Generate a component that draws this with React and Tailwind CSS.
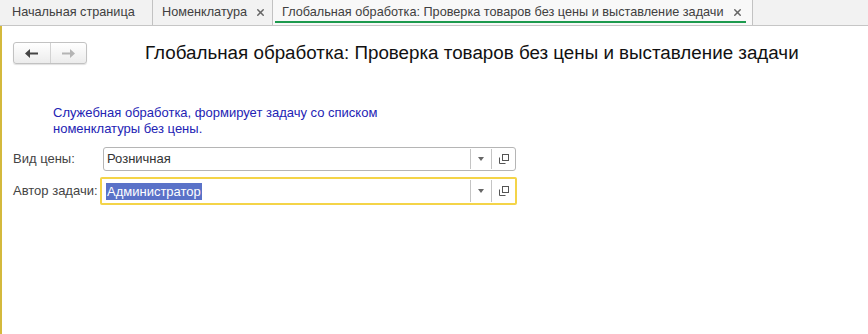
import { X } from 'lucide-react'

function OpenIcon() {
  return (
    <svg width="10" height="10" viewBox="0 0 10 10" fill="none" stroke="#555" strokeWidth="1">
      <rect x="3.5" y="0.5" width="6" height="6" />
      <path d="M0.5 3.5v6h6" />
    </svg>
  )
}

function Field({ value, focused }) {
  return (
    <div
      className={
        focused
          ? 'flex h-[28px] w-[417px] items-stretch rounded-[2px] border-2 border-[#f4d448] bg-white -ml-[3px]'
          : 'flex h-[24px] w-[413px] items-stretch rounded-[3px] border border-[#b5b5b5] bg-white'
      }
    >
      <div className={focused ? 'flex flex-1 items-center pl-[4px]' : 'flex flex-1 items-center pl-[3px]'}>
        {focused ? (
          <span className="bg-[#5a72c8] px-[1px] leading-[17px] text-white">{value}</span>
        ) : (
          <span className="text-[#333]">{value}</span>
        )}
      </div>
      <div className="my-[1px] flex w-[21px] items-center justify-center border-l border-[#c4c4c4]">
        <svg width="6" height="4" viewBox="0 0 6 4">
          <path d="M0 0h6L3 4z" fill="#666" />
        </svg>
      </div>
      <div className="my-[1px] flex w-[24px] items-center justify-center border-l border-[#c4c4c4]">
        <OpenIcon />
      </div>
    </div>
  )
}

export default function App() {
  return (
    <div className="flex h-[334px] w-[868px] flex-col bg-white font-['Liberation_Sans',Arial,sans-serif] text-[13px]">
      {/* tabs */}
      <div className="flex h-[26px] shrink-0 border-b border-[#c6c6c6] bg-[#f2f2f2] text-[12.7px] text-[#404040]">
        <div className="flex w-[153px] items-center whitespace-nowrap border-r border-[#c2c2c2] pl-[12px]">
          Начальная страница
        </div>
        <div className="flex w-[120px] items-center whitespace-nowrap border-r border-[#c2c2c2] pl-[9px]">
          Номенклатура
          <X size={11} strokeWidth={3.2} className="ml-[8px] shrink-0 text-[#666]" />
        </div>
        <div className="relative flex w-[480px] items-center whitespace-nowrap border-r border-[#c2c2c2] bg-[#f8f8f8] pl-[9px]">
          <span>Глобальная обработка: Проверка товаров без цены и выставление задачи</span>
          <X size={11} strokeWidth={3.2} className="ml-[8px] shrink-0 text-[#666]" />
          <div className="absolute bottom-[2px] left-[2px] right-[6px] h-[2px] bg-[#1d9a4e]" />
        </div>
      </div>

      {/* content */}
      <div className="flex flex-1 flex-col border-l-2 border-[#d4b93c] pl-[11px] pt-[13px]">
        <div className="flex items-center">
          <div className="flex h-[22px] w-[74px] shrink-0 rounded-[3px] border border-[#c2c2c2] bg-gradient-to-b from-white to-[#ececec] shadow-[0_1px_1px_rgba(0,0,0,0.12)]">
            <div className="flex flex-1 items-center justify-center border-r border-[#d2d2d2]">
              <svg width="13" height="9" viewBox="0 0 13 9">
                <path d="M0 4.5L5 0v3.5h8v2H5V9z" fill="#444" />
              </svg>
            </div>
            <div className="flex flex-1 items-center justify-center">
              <svg width="13" height="9" viewBox="0 0 13 9">
                <path d="M13 4.5L8 0v3.5H0v2h8V9z" fill="#b4b4b4" />
              </svg>
            </div>
          </div>
          <div className="ml-[58px] whitespace-nowrap text-[18.8px] text-[#111]">
            Глобальная обработка: Проверка товаров без цены и выставление задачи
          </div>
        </div>

        <div className="ml-[40px] mt-[38px] leading-[16px] text-[#2323b4]">
          <div>Служебная обработка, формирует задачу со списком</div>
          <div>номенклатуры без цены.</div>
        </div>

        <div className="mt-[10px] flex items-center">
          <div className="w-[90px] text-[#444]">Вид цены:</div>
          <Field value="Розничная" />
        </div>
        <div className="mt-[6px] flex items-center">
          <div className="w-[90px] text-[#444]">Автор задачи:</div>
          <Field value="Администратор" focused />
        </div>
      </div>
    </div>
  )
}
